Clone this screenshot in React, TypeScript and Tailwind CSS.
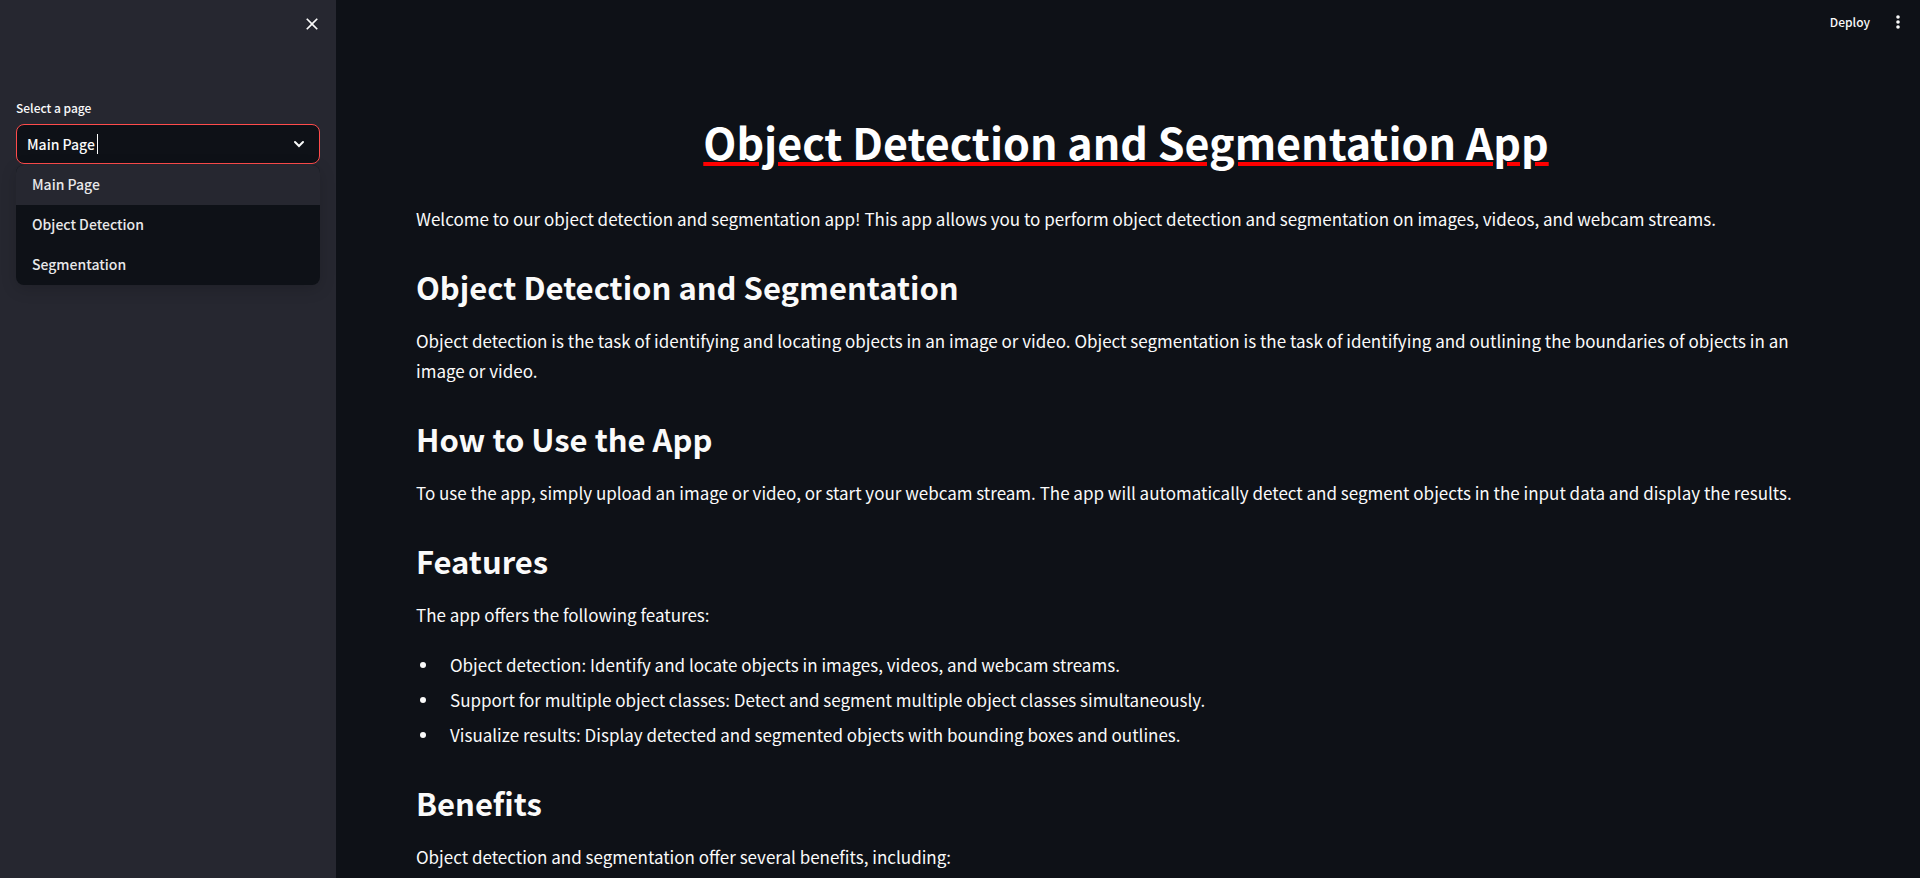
import { useState } from "react";

const pages = ["Main Page", "Object Detection", "Segmentation"];

const features = [
  "Object detection: Identify and locate objects in images, videos, and webcam streams.",
  "Support for multiple object classes: Detect and segment multiple object classes simultaneously.",
  "Visualize results: Display detected and segmented objects with bounding boxes and outlines.",
];

function Section({ title, children }: { title: string; children: React.ReactNode }) {
  return (
    <section className="mt-4">
      <h2 className="pt-[15px] pb-[17px] text-[31px] leading-11 font-bold">{title}</h2>
      {children}
    </section>
  );
}

function Sidebar() {
  const [page, setPage] = useState("Main Page");
  return (
    <aside className="w-84 shrink-0 bg-[#262730] px-4">
      <div className="flex h-24 justify-end pt-3">
        <button type="button" aria-label="Close sidebar" className="flex h-6 w-4 items-center justify-center">
          <svg viewBox="0 0 24 24" className="h-5 w-5 shrink-0" fill="currentColor" aria-hidden="true">
            <path d="M19 6.41 17.59 5 12 10.59 6.41 5 5 6.41 10.59 12 5 17.59 6.41 19 12 13.41 17.59 19 19 17.59 13.41 12z" />
          </svg>
        </button>
      </div>
      <label htmlFor="page" className="mb-1 block text-[12px] leading-6 font-medium">
        Select a page
      </label>
      <div className="relative">
        <div className="flex h-10 items-center rounded-lg border border-[#ff4b4b] bg-[#0e1117] px-2.5">
          <input
            id="page"
            role="combobox"
            aria-expanded="true"
            aria-controls="page-list"
            value={page}
            onChange={(e) => setPage(e.target.value)}
            className="field-sizing-content bg-transparent text-sm leading-6 font-medium caret-transparent outline-none"
          />
          <span className="ml-0.5 h-5 w-px bg-white" />
          <svg viewBox="0 0 20 20" className="ml-auto h-5 w-5" fill="none" stroke="currentColor" strokeWidth="2" strokeLinecap="round" strokeLinejoin="miter" aria-hidden="true">
            <path d="M6 8l4 4 4-4" />
          </svg>
        </div>
        <ul
          id="page-list"
          role="listbox"
          aria-label="Pages"
          className="absolute inset-x-0 top-full mt-px overflow-hidden rounded-lg bg-[#0e1117] text-[#e8e8e9] shadow-[0_4px_16px_rgba(0,0,0,0.16)]"
        >
          {pages.map((name) => (
            <li
              key={name}
              role="option"
              aria-selected={name === page}
              onClick={() => setPage(name)}
              className="h-10 cursor-pointer px-4 text-sm leading-[38px] font-medium aria-selected:bg-[#262730]"
            >
              {name}
            </li>
          ))}
        </ul>
      </div>
    </aside>
  );
}

export default function App() {
  return (
    <div className="flex h-screen overflow-hidden bg-[#0e1117] font-['Noto_Sans_CJK_SC','Noto_Sans_CJK_JP',sans-serif] text-[#fafafa]">
      <Sidebar />
      <main className="min-w-0 flex-1 overflow-hidden">
        <header className="flex h-11 items-center justify-end gap-5 pr-3.5">
          <button type="button" className="text-[12px] leading-6 font-medium">
            Deploy
          </button>
          <button type="button" aria-label="Main menu" className="flex h-5 w-4 items-center justify-center">
            <svg viewBox="0 0 8 16" className="h-4 w-2" fill="currentColor" aria-hidden="true">
              <circle cx="4" cy="3" r="1.8" />
              <circle cx="4" cy="8" r="1.8" />
              <circle cx="4" cy="13" r="1.8" />
            </svg>
          </button>
        </header>
        <article className="px-20 pt-[67px] text-[17px] leading-[30px]">
          <h1 className="pr-1 text-center text-[43px] leading-15 font-bold text-white underline decoration-[#ff0000] decoration-4">
            Object Detection and Segmentation App
          </h1>
          <p className="mt-[33px]">
            Welcome to our object detection and segmentation app! This app allows you to perform object detection and
            segmentation on images, videos, and webcam streams.
          </p>
          <Section title="Object Detection and Segmentation">
            <p>
              Object detection is the task of identifying and locating objects in an image or video. Object segmentation
              is the task of identifying and outlining the boundaries of objects in an image or video.
            </p>
          </Section>
          <Section title="How to Use the App">
            <p>
              To use the app, simply upload an image or video, or start your webcam stream. The app will automatically
              detect and segment objects in the input data and display the results.
            </p>
          </Section>
          <Section title="Features">
            <p>The app offers the following features:</p>
            <ul className="mt-5 flex flex-col gap-[5px] pl-1">
              {features.map((feature) => (
                <li
                  key={feature}
                  className="flex items-center gap-6 before:size-1.5 before:shrink-0 before:rounded-full before:bg-current"
                >
                  {feature}
                </li>
              ))}
            </ul>
          </Section>
          <Section title="Benefits">
            <p>Object detection and segmentation offer several benefits, including:</p>
          </Section>
        </article>
      </main>
    </div>
  );
}
